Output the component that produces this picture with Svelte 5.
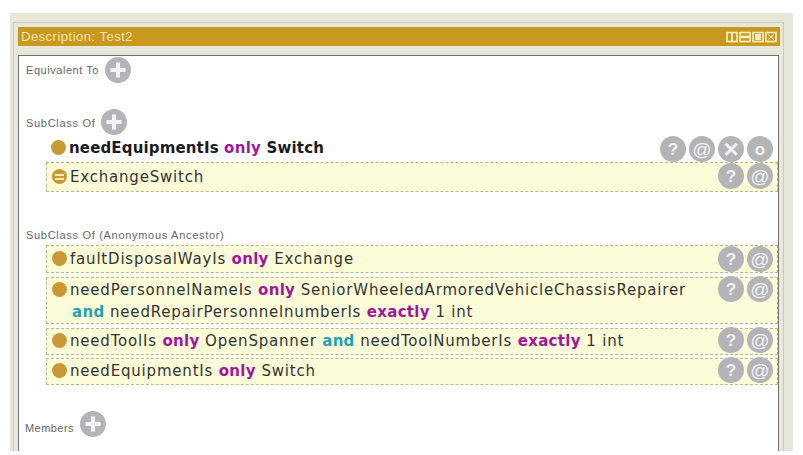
<script lang="ts">
  // Protege-style class description panel
  const rows = [
    { lines: [[["faultDisposalWayIs ", ""], ["only", "k"], [" Exchange", ""]]] },
    {
      lines: [
        [["needPersonnelNameIs ", ""], ["only", "k"], [" SeniorWheeledArmoredVehicleChassisRepairer", ""]],
        [["and", "a"], [" needRepairPersonnelnumberIs ", ""], ["exactly", "k"], [" 1 int", ""]],
      ],
    },
    { lines: [[["needToolIs ", ""], ["only", "k"], [" OpenSpanner ", ""], ["and", "a"], [" needToolNumberIs ", ""], ["exactly", "k"], [" 1 int", ""]]] },
    { lines: [[["needEquipmentIs ", ""], ["only", "k"], [" Switch", ""]]] },
  ];
</script>

{#snippet plus()}
  <svg class="plus" viewBox="0 0 26 26" aria-hidden="true">
    <circle cx="13" cy="13" r="13" fill="#b4b4b8" />
    <path d="M13 5.5v15M5.5 13h15" stroke="#f4f4f6" stroke-width="4" />
  </svg>
{/snippet}

{#snippet btn(glyph)}
  <span class="btn" class:thin={glyph === "@"} class:cross={glyph === "×"}>{glyph}</span>
{/snippet}

<div class="page">
  <div class="frame">
    <div class="panel">
      <header class="bar">
        <span>Description: Test2</span>
        <svg class="winicons" viewBox="0 0 52 12" width="52" height="12" aria-hidden="true">
          <g fill="none" stroke="#fbf0c4" stroke-width="1.6">
            <rect x="1" y="1.5" width="10" height="9" />
            <path d="M6 1.5v9" stroke-width="2" />
            <rect x="14" y="1.5" width="10" height="9" />
            <path d="M14 6h10" stroke-width="2.6" />
            <rect x="27" y="1.5" width="10" height="9" />
            <rect x="40" y="1.5" width="10" height="9" />
            <path d="M42 3.5l6 5M48 3.5l-6 5" stroke-width="1" />
          </g>
          <rect x="29" y="3" width="6" height="6" fill="#fbf0c4" />
        </svg>
      </header>
      <div class="content">
        <div class="head first"><span>Equivalent To</span>{@render plus()}</div>

        <div class="head second"><span>SubClass Of</span>{@render plus()}</div>
        <div class="inherited">
          <span class="dot"></span>
          <div class="text strong">needEquipmentIs <b class="k">only</b> Switch</div>
          <div class="btns">
            {@render btn("?")}{@render btn("@")}{@render btn("×")}{@render btn("o")}
          </div>
        </div>
        <div class="row tall">
          <span class="dot eq"><i></i></span>
          <div class="text">ExchangeSwitch</div>
          <div class="btns">{@render btn("?")}{@render btn("@")}</div>
        </div>

        <div class="head third"><span>SubClass Of (Anonymous Ancestor)</span></div>
        {#each rows as r}
          <div class="row" class:double={r.lines.length > 1}>
            <span class="dot"></span>
            <div class="text">
              {#each r.lines as line, i}
                <div class:cont={i > 0}>
                  {#each line as [t, c]}{#if c}<b class={c}>{t}</b>{:else}{t}{/if}{/each}
                </div>
              {/each}
            </div>
            <div class="btns">{@render btn("?")}{@render btn("@")}</div>
          </div>
        {/each}

        <div class="head last"><span>Members</span>{@render plus()}</div>
      </div>
    </div>
  </div>
</div>

<style>
  :global(body) {
    margin: 0;
    background: #fff;
  }

  .page {
    width: 803px;
    height: 455px;
    padding: 13px 10px 4px 10px;
    box-sizing: border-box;
    overflow: hidden;
  }

  .frame {
    height: 100%;
    box-sizing: border-box;
    background: #e9e6da;
    padding: 9px 9px 0 3px;
  }

  .panel {
    height: 100%;
    box-sizing: border-box;
    padding: 4px 3px 0 4px;
    border: solid #c4c9c2;
    border-width: 1px 1px 0 1px;
  }

  .bar {
    height: 19px;
    background: #c8981f;
    color: #f3e3ae;
    font: 13px "Liberation Sans", sans-serif;
    letter-spacing: 0.5px;
    display: flex;
    align-items: center;
    justify-content: space-between;
    padding: 0 2px 0 3px;
  }

  .winicons {
    display: block;
  }

  .content {
    margin: 9px 1px 0 0;
    height: 396px;
    box-sizing: border-box;
    background: #fff;
    border: 1px solid #6f7472;
    border-bottom: 0;
    font-family: "DejaVu Sans", sans-serif;
    color: #333;
  }

  .head {
    display: flex;
    align-items: center;
    gap: 6px;
    margin-left: 7px;
    font: 11px "Liberation Sans", sans-serif;
    letter-spacing: 0.55px;
    color: #666;
    height: 26px;
  }

  .first {
    margin-top: 1px;
  }

  .second {
    margin-top: 26px;
    letter-spacing: 0.7px;
  }

  .second span {
    margin-top: 2px;
  }

  .third {
    margin-top: 36px;
    height: 14px;
    letter-spacing: 0.7px;
  }

  .last {
    margin-top: 26px;
    margin-left: 6px;
    letter-spacing: 0.45px;
  }

  .last span {
    margin-top: 8px;
  }

  .plus {
    width: 26px;
    height: 26px;
    display: block;
  }

  .inherited,
  .row {
    display: flex;
    box-sizing: border-box;
    margin-left: 27px;
    font-size: 15px;
    line-height: 22px;
    letter-spacing: 0.8px;
  }

  .inherited {
    height: 27px;
    padding: 2px 5px 0 5px;
  }

  .inherited .btns {
    margin-top: 2px;
  }

  .row {
    min-height: 27px;
    padding: 1px 4px 1px 5px;
    background: #fcfcd9;
    border: 1px dashed #b9b990;
  }

  .tall {
    min-height: 30px;
    padding-top: 3px;
  }

  .double {
    padding-bottom: 0;
  }

  .third + .row {
    margin-top: 3px;
    min-height: 28px;
    padding-top: 2px;
  }

  .third + .row .btns {
    margin-top: 1px;
  }

  .row + .row {
    margin-top: 4px;
  }

  .row:nth-last-child(2) {
    margin-top: 3px;
  }

  .dot {
    width: 15px;
    height: 15px;
    border-radius: 50%;
    background: #c99a34;
    flex: none;
    margin-top: 3px;
    margin-right: 3px;
    display: flex;
    align-items: center;
    justify-content: center;
  }

  .dot.eq i {
    width: 9px;
    height: 6px;
    border: solid #f6ecc8;
    border-width: 2px 0;
    box-sizing: border-box;
  }

  .text {
    flex: 1;
    white-space: nowrap;
  }

  .strong {
    font-weight: 700;
    color: #1a1a22;
    letter-spacing: 0.15px;
  }

  .cont {
    margin-left: 2px;
  }

  .k {
    color: #a0179f;
  }

  .a {
    color: #1fa3ad;
  }

  b {
    font-weight: 700;
    letter-spacing: 0.3px;
  }

  /* the round buttons overlap the row edges, so they must not set its height */
  .btns {
    display: flex;
    gap: 3px;
    flex: none;
    height: 22px;
  }

  .btn {
    width: 26px;
    height: 26px;
    margin-top: -3px;
    border-radius: 50%;
    background: #b4b4b8;
    color: #f1f1f3;
    font: 700 17px/27px "Liberation Sans", sans-serif;
    letter-spacing: 0;
    text-align: center;
  }

  .thin {
    font-weight: 400;
    font-size: 19px;
  }

  .cross {
    font-size: 26px;
    line-height: 26px;
  }
</style>
